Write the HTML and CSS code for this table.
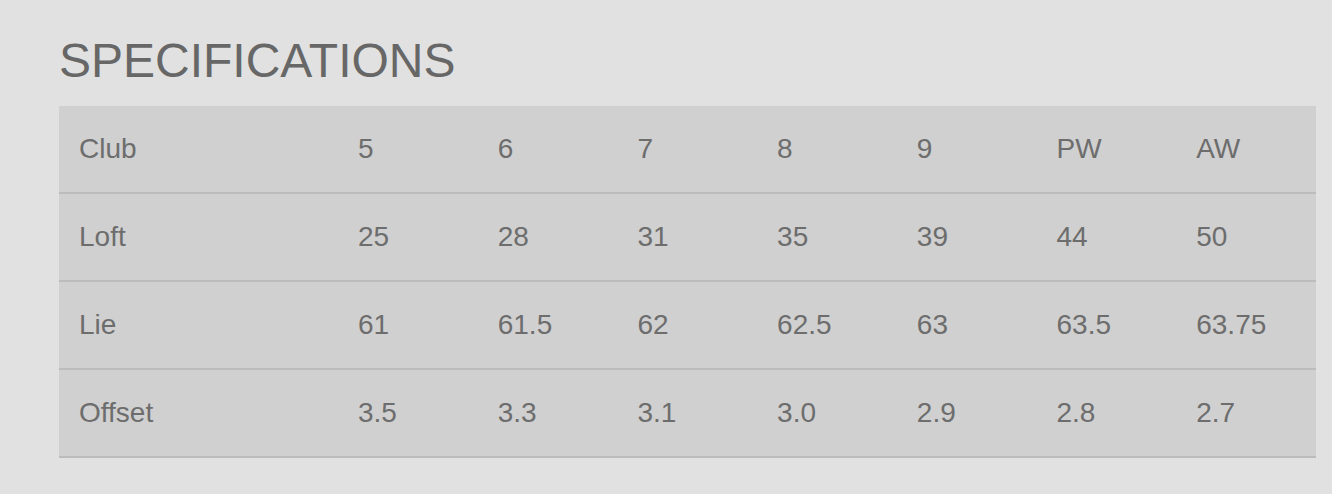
FILE: index.html
```html
<!DOCTYPE html>
<html>
<head>
<meta charset="utf-8">
<link rel="stylesheet" href="styles.css">
</head>
<body>
<section class="specs">
  <h2 class="specs-title">SPECIFICATIONS</h2>
  <table class="specs-table">
    <colgroup><col class="col-label"><col><col><col><col><col><col><col></colgroup>
    <tbody>
      <tr><td>Club</td><td>5</td><td>6</td><td>7</td><td>8</td><td>9</td><td>PW</td><td>AW</td></tr>
      <tr><td>Loft</td><td>25</td><td>28</td><td>31</td><td>35</td><td>39</td><td>44</td><td>50</td></tr>
      <tr><td>Lie</td><td>61</td><td>61.5</td><td>62</td><td>62.5</td><td>63</td><td>63.5</td><td>63.75</td></tr>
      <tr><td>Offset</td><td>3.5</td><td>3.3</td><td>3.1</td><td>3.0</td><td>2.9</td><td>2.8</td><td>2.7</td></tr>
    </tbody>
  </table>
</section>
</body>
</html>
```
FILE: styles.css
```css
html, body {
  margin: 0;
  padding: 0;
  background: #e1e1e1;
}
body {
  font-family: "Liberation Sans", Arial, sans-serif;
  color: #666666;
}
.specs {
  padding: 33px 16px 0 59px;
}
.specs-title {
  margin: 0 0 18px 0;
  font-size: 48px;
  font-weight: normal;
  line-height: 55px;
  color: #676767;
}
.specs-table {
  width: 1257px;
  border-collapse: collapse;
  table-layout: fixed;
  background: #d0d0d0;
}
.col-label {
  width: 279px;
}
.specs-table td {
  padding: 27px 0 27px 20px;
  font-size: 28px;
  line-height: 32px;
  color: #6d6d6d;
  border-bottom: 2px solid #bcbcbc;
  text-align: left;
  vertical-align: middle;
}
```
